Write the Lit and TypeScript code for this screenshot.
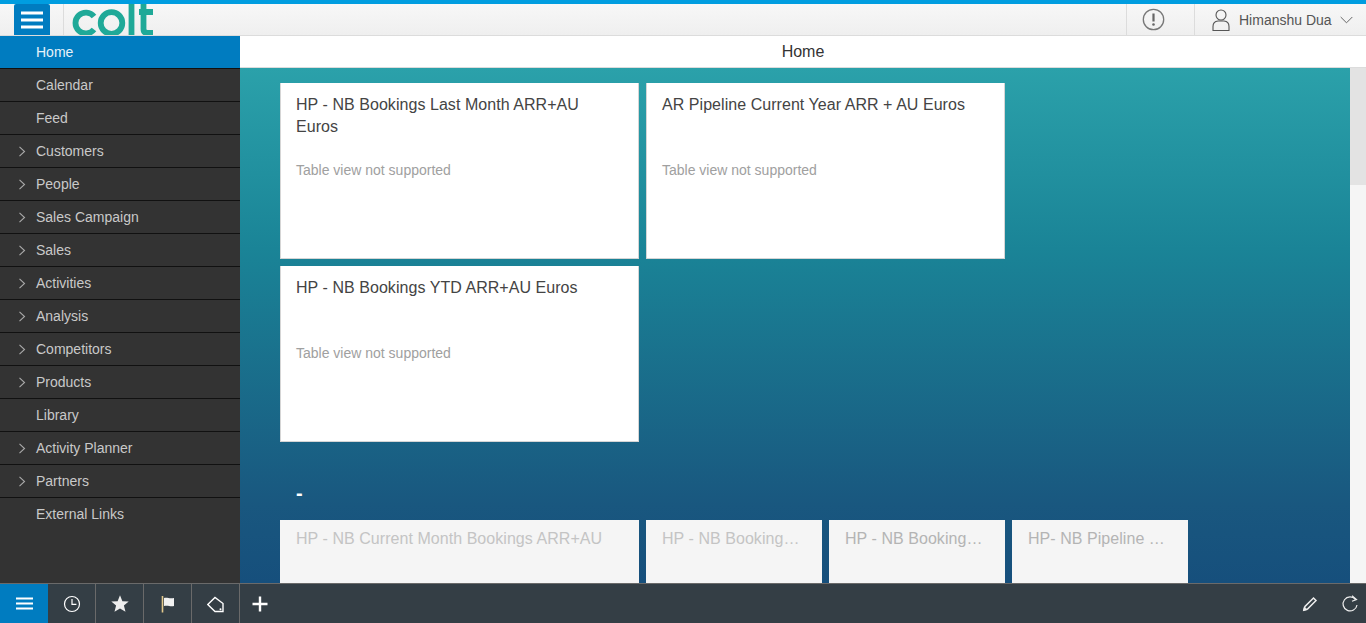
import { css, html, LitElement, svg } from 'lit';
import { customElement } from 'lit/decorators.js';

const NAV = [
  { label: 'Home', active: true },
  { label: 'Calendar' },
  { label: 'Feed' },
  { label: 'Customers', sub: true },
  { label: 'People', sub: true },
  { label: 'Sales Campaign', sub: true },
  { label: 'Sales', sub: true },
  { label: 'Activities', sub: true },
  { label: 'Analysis', sub: true },
  { label: 'Competitors', sub: true },
  { label: 'Products', sub: true },
  { label: 'Library' },
  { label: 'Activity Planner', sub: true },
  { label: 'Partners', sub: true },
  { label: 'External Links' },
];

const FOOT_ICONS = [
  svg`<circle cx="9" cy="9" r="7.500" fill="none" stroke="#fff" stroke-width="1.200"/><path d="M9 4v5.400h4.400" fill="none" stroke="#fff" stroke-width="1.200"/>`,
  svg`<path d="M9 .3l2.400 5.900 6.300.4-4.800 4 1.600 6.200L9 13.400l-5.500 3.400 1.600-6.200-4.800-4 6.300-.4z" fill="#eee"/>`,
  svg`<path d="M3.500 1v16.500" stroke="#e3c98c" stroke-width="1.600"/><path d="M5 3c3-1 5 .8 10 0v8c-4 .8-6-1-10 0z" fill="#f1f1f1"/>`,
  svg`<path d="M.8 9.500L8 2.500l8 6v8H8z" fill="none" stroke="#fff" stroke-width="1.400"/><circle cx="13.500" cy="14.300" r="1" fill="#fff"/>`,
];

@customElement('app-root')
class AppRoot extends LitElement {
  static styles = css`
    :host {
      display: grid;
      grid-template-rows: 36px 1fr 40px;
      height: 100vh;
      overflow: hidden;
      font-family: 'Liberation Sans', Arial, sans-serif;
      color: #333;
    }

    header {
      display: flex;
      align-items: stretch;
      box-sizing: border-box;
      border-top: 4px solid #009de0;
      border-bottom: 1px solid #dcdcdc;
      background: linear-gradient(#f7f7f7, #efefef);
    }

    .menu-btn {
      display: flex;
      align-items: center;
      justify-content: center;
      width: 36px;
      margin-left: 14px;
      background: #007cc0;
      border-radius: 2px 2px 0 0;
    }

    .logo {
      margin-left: 13px;
      padding-left: 7px;
      border-left: 1px solid #dcdcdc;
      height: 31px;
    }

    .spacer {
      flex: 1;
    }

    .alert {
      display: flex;
      align-items: center;
      box-sizing: border-box;
      width: 69px;
      padding-left: 15px;
      border-left: 1px solid #dcdcdc;
      border-right: 1px solid #dcdcdc;
    }

    .user {
      display: flex;
      align-items: center;
      width: 171px;
      box-sizing: border-box;
      padding-left: 17px;
      font-size: 14px;
      color: #555;
    }

    .user span {
      margin: 0 8px 0 9px;
    }

    .middle {
      display: grid;
      grid-template-columns: 240px 1fr;
      min-height: 0;
    }

    nav {
      background: #333;
      overflow: hidden;
    }

    .item {
      display: flex;
      align-items: center;
      box-sizing: border-box;
      height: 33px;
      padding-left: 36px;
      border-bottom: 1px solid #111;
      font-size: 14px;
      color: #c9c9c9;
      position: relative;
    }

    .item:last-child {
      border-bottom-color: transparent;
    }

    .item.active {
      background: #007cc0;
      color: #e6f2f9;
    }

    .item svg {
      position: absolute;
      left: 18px;
      top: 11px;
    }

    main {
      display: grid;
      grid-template-rows: 32px 1fr;
      min-width: 0;
      min-height: 0;
    }

    .title {
      display: flex;
      align-items: center;
      justify-content: center;
      background: #fff;
      border-bottom: 1px solid #dcdcdc;
      box-sizing: border-box;
      font-size: 16px;
      color: #333;
    }

    .body {
      display: grid;
      grid-template-columns: 1fr 16px;
      min-height: 0;
    }

    .canvas {
      background: linear-gradient(#2ba1aa, #1a8497 35%, #19577f 85%, #164f7c);
      padding: 15px 0 0 40px;
      overflow: hidden;
      min-height: 0;
    }

    .row {
      display: flex;
      gap: 7px;
      margin-bottom: 7px;
    }

    .card {
      box-sizing: border-box;
      width: 359px;
      height: 176px;
      padding: 11px 15px;
      background: #fff;
      border: 1px solid #d5d5d5;
      border-top: 0;
      font-size: 16px;
      line-height: 22px;
      color: #444;
      flex: none;
    }

    .card h3 {
      margin: 0;
      font: inherit;
      letter-spacing: 0.05px;
      height: 44px;
    }

    .card p {
      margin: 22px 0 0;
      font-size: 14px;
      line-height: 20px;
      color: #a0a0a0;
    }

    .group {
      margin: 0;
      padding: 29px 0 0 16px;
      height: 35px;
      font: 700 20px/30px 'Liberation Sans', Arial, sans-serif;
      color: #fff;
    }

    .row.dim {
      margin: 7px 0 0;
    }

    .row.dim .card {
      background: #f5f5f5;
      border: 0;
      color: #c4c4c4;
      padding: 8px 16px;
    }

    .row.dim .card.small {
      width: 176px;
    }

    .row.dim .card.darker {
      color: #b4b4b4;
    }

    .row.dim h3 {
      white-space: nowrap;
    }

    .scrollbar {
      background: #f5f5f5;
    }

    .thumb {
      height: 117px;
      background: #e3e3e3;
    }

    footer {
      display: flex;
      align-items: stretch;
      box-sizing: border-box;
      background: #343e45;
      border-top: 1px solid #6a6a6a;
    }

    .tab {
      display: flex;
      align-items: center;
      justify-content: center;
      box-sizing: border-box;
      width: 48px;
      border-right: 1px solid #6a6a6a;
    }

    .tab.active {
      background: #007cc0;
      border-right: 0;
    }

    .plus {
      margin-left: 11px;
      align-self: center;
    }

    .tools {
      display: flex;
      align-items: center;
      gap: 22px;
      padding-right: 7px;
    }
  `;

  private chevron() {
    return html`<svg width="8" height="11" viewBox="0 0 8 11"><path d="M1.500 .8l5 4.700-5 4.700" fill="none" stroke="#aaa" stroke-width="1.100"/></svg>`;
  }

  private logo() {
    return html`<svg class="logo" width="90" height="31" viewBox="0 0 90 31">
      <g fill="none" stroke="#1fa998" stroke-width="5.800">
        <path d="M23 12.500A10.400 10.400 0 1 0 23 25.500"/>
        <circle cx="40.500" cy="19" r="10.800"/>
        <path d="M60.500 -2V31"/>
        <path d="M72.500 -2V25q0 4 4 4h5.500M68 8h14"/>
      </g>
    </svg>`;
  }

  private card(title: string) {
    return html`<div class="card"><h3>${title}</h3><p>Table view not supported</p></div>`;
  }

  render() {
    return html`
      <header>
        <div class="menu-btn">
          <svg width="22" height="18" viewBox="0 0 22 18"><path d="M0 2h22M0 9h22M0 16h22" stroke="#fff" stroke-width="3"/></svg>
        </div>
        ${this.logo()}
        <div class="spacer"></div>
        <div class="alert">
          <svg width="23" height="23" viewBox="0 0 23 23">
            <circle cx="11.500" cy="11.500" r="10.200" fill="none" stroke="#777" stroke-width="1.300"/>
            <path d="M11.500 5.500v8" stroke="#666" stroke-width="2.200"/>
            <circle cx="11.500" cy="16.500" r="1.300" fill="#666"/>
          </svg>
        </div>
        <div class="user">
          <svg width="18" height="22" viewBox="0 0 18 22">
            <circle cx="9" cy="6" r="5" fill="none" stroke="#555" stroke-width="1.100"/>
            <path d="M1 21.500v-4q0-5 5-5.500h6q5 .5 5 5.500v4z" fill="none" stroke="#555" stroke-width="1.100"/>
          </svg>
          <span>Himanshu Dua</span>
          <svg width="13" height="8" viewBox="0 0 13 8"><path d="M.7 1l5.800 5.800L12.300 1" fill="none" stroke="#666" stroke-width="1"/></svg>
        </div>
      </header>
      <div class="middle">
        <nav>
          ${NAV.map(
            (n) => html`<div class="item ${n.active ? 'active' : ''}">${n.sub ? this.chevron() : ''}${n.label}</div>`
          )}
        </nav>
        <main>
          <div class="title">Home</div>
          <div class="body">
            <div class="canvas">
              <div class="row">
                ${this.card('HP - NB Bookings Last Month ARR+AU Euros')}
                ${this.card('AR Pipeline Current Year ARR + AU Euros')}
              </div>
              <div class="row">${this.card('HP - NB Bookings YTD ARR+AU Euros')}</div>
              <h2 class="group">-</h2>
              <div class="row dim">
                <div class="card"><h3>HP - NB Current Month Bookings ARR+AU</h3></div>
                <div class="card small"><h3>HP - NB Booking…</h3></div>
                <div class="card small darker"><h3>HP - NB Booking…</h3></div>
                <div class="card small darker"><h3>HP- NB Pipeline …</h3></div>
              </div>
            </div>
            <div class="scrollbar"><div class="thumb"></div></div>
          </div>
        </main>
      </div>
      <footer>
        <div class="tab active">
          <svg width="17" height="13" viewBox="0 0 17 13"><path d="M0 1.500h17M0 6.500h17M0 11.500h17" stroke="#fff" stroke-width="2"/></svg>
        </div>
        ${FOOT_ICONS.map((i) => html`<div class="tab"><svg width="18" height="18" viewBox="0 0 18 18">${i}</svg></div>`)}
        <svg class="plus" width="18" height="18" viewBox="0 0 18 18"><path d="M9 1.500v15M1.500 9h15" stroke="#fff" stroke-width="2.400"/></svg>
        <div class="spacer"></div>
        <div class="tools">
          <svg width="18" height="18" viewBox="0 0 18 18"><path d="M3 15l1-3.500L12.500 3l2.500 2.500L6.500 14z" fill="none" stroke="#eee" stroke-width="1.500"/><path d="M1.800 16.200l1.200-4.700 3.500 3.500z" fill="#eee"/></svg>
          <svg width="18" height="18" viewBox="0 0 18 18"><path d="M14.500 4.500A7 7 0 1 0 16 10" fill="none" stroke="#eee" stroke-width="1.200"/><path d="M11 .8l4.500 3.700-4.500 1.800" fill="none" stroke="#eee" stroke-width="1.200"/></svg>
        </div>
      </footer>
    `;
  }
}
